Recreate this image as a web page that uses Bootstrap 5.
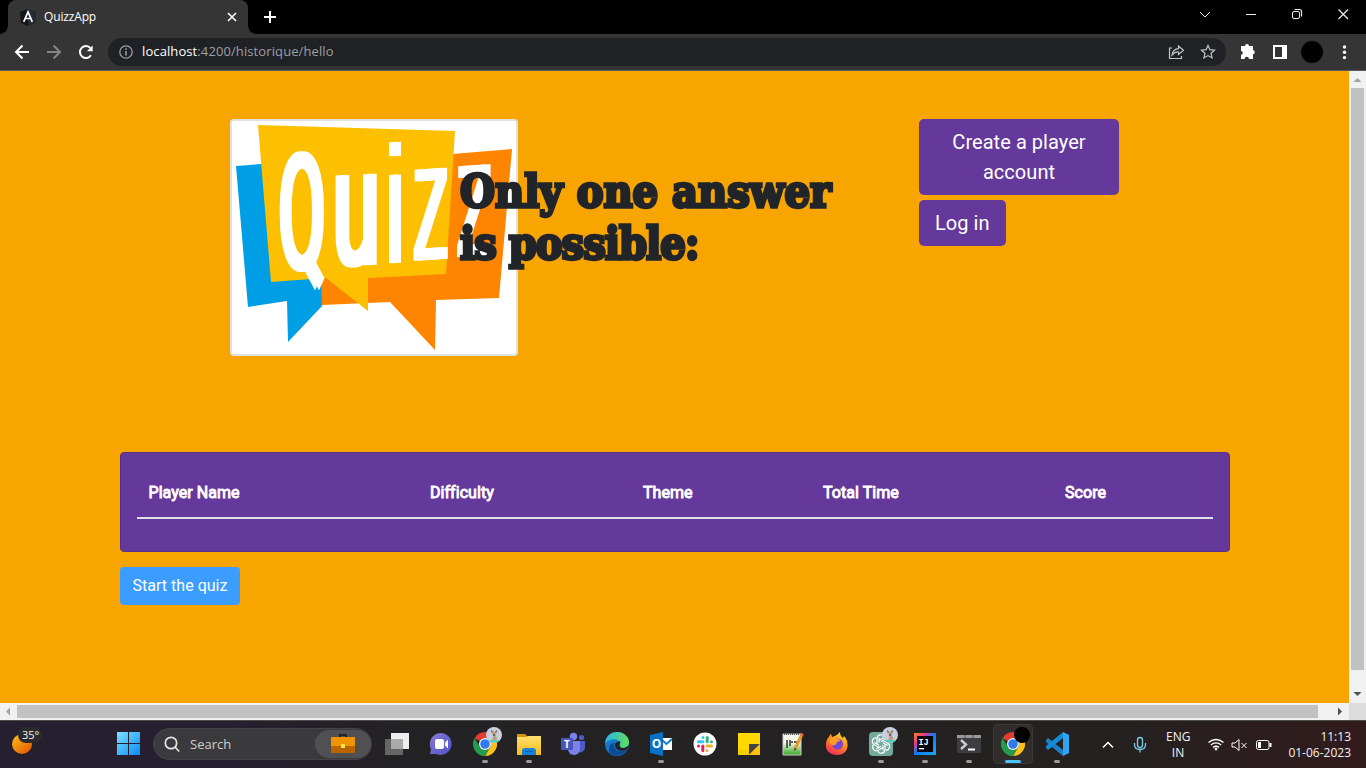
<!DOCTYPE html>
<html lang="en">
<head>
<meta charset="utf-8">
<title>QuizzApp</title>
<link href="https://cdn.jsdelivr.net/npm/bootstrap@5.3.0/dist/css/bootstrap.min.css" rel="stylesheet">
<script src="https://cdn.jsdelivr.net/npm/bootstrap@5.3.0/dist/js/bootstrap.bundle.min.js"></script>
<style>
body{width:1366px;height:768px;font-family:"Open Sans","Noto Sans",sans-serif;background:#000}
svg{display:block;flex:none}
.titlebar{height:34px;background:#000;color:#fff}
.window-controls{padding:0 16px 6px 0}
.tab{position:relative;width:240px;height:34px;margin-left:8px;background:#353535;border-radius:8px 8px 0 0;font-size:12px;letter-spacing:-.15px;padding:0 10px 0 12px}
.tab::before,.tab::after{content:"";position:absolute;bottom:0;width:8px;height:8px}
.tab::before{left:-8px;background:radial-gradient(circle at 0 0,#000 7.5px,#353535 8px)}
.tab::after{right:-8px;background:radial-gradient(circle at 100% 0,#000 7.5px,#353535 8px)}
.toolbar{height:37px;background:#353535;border-bottom:1px solid #5c5c5c}
.address{width:1118px;height:28px;border-radius:14px;background:#202124;font-size:13px;letter-spacing:.1px;color:#9aa0a6;padding:0 10px}
.page{width:1349px;height:632px;background:#f8a500;font-family:Roboto,sans-serif}
.hero{height:333px;padding:48px 0 0 230px}
.logo-frame{width:288px;height:237px;background:#fff;border:2px solid #dee2e6;border-radius:4px}
.logo-frame svg{overflow:visible}
.logo-word{fill:#fff;font-family:"Liberation Sans",sans-serif;filter:drop-shadow(4px 0 0 #fff)}
.logo-word .round{font-family:Roboto,sans-serif}
.logo-word .bold-stem{stroke:#fff;stroke-width:4px}
.headline{width:459px;margin-left:-58px;padding-top:47px;position:relative}
.headline h1{font-family:"DejaVu Serif",serif;font-weight:700;font-size:44px;line-height:52px;color:#212529;-webkit-text-stroke:3.4px #212529;white-space:nowrap;transform:scaleX(.912);transform-origin:0 0;margin:0}
.headline .tight{letter-spacing:-1.1px}
.btn-violet{background:#65389b!important;color:#fff!important;border-radius:5px;font-size:20px;line-height:30px;padding:8px 16px;border:0;letter-spacing:.05px}
.score-card{width:1110px;height:100px;margin:48px 0 0 120px;background:#65389b;border:1px solid #58318c;border-radius:4px;padding:16px}
.score-table{table-layout:fixed;color:#fff;margin:0}
.score-table th{font-weight:400;-webkit-text-stroke:.9px #fff;padding:12px;line-height:24px;border-bottom:2px solid #dee2e6;background:transparent;color:#fff;letter-spacing:.05px}
.score-table th:first-child{padding-left:11.500px}
.btn-start{margin:15px 0 0 120px;background:#3a9dff;color:#fff;width:120px;height:38px;border:0;border-radius:4px;padding:6px 12px;font-size:16px;letter-spacing:.02px;white-space:nowrap}
.vbar{width:17px;background:#f1f1f1}
.vthumb{width:13px;height:582px;background:#c1c1c1}
.hbar{height:17px;background:#f1f1f1}
.hthumb{width:1301px;height:13px;background:#c1c1c1}
.taskbar{height:48px;border-top:1px solid #4b4b49;padding-bottom:2px;background:linear-gradient(90deg,#261f2f 0,#261f2f 230px,#232224 390px,#242120 1120px,#321b1c 1366px);color:#f3f3f3;font-size:12px;line-height:16px}
.weather{position:relative;width:117px}
.temp{position:absolute;left:18px;top:7px;background:#2b2b2b;border-radius:8px;padding:0 3px 0 4px;font-size:11px;line-height:16px}
.search{width:219px;height:32px;border-radius:16px;background:#3a393b;border:1px solid #444346;font-size:13px;color:#cfcfcf;padding-left:10px;margin:1px 3px 0 13px}
.search-pill{width:56px;height:28px;border-radius:14px;background:#505052}
.app{position:relative;width:44px;height:47px}
.app>svg{width:24px;height:24px}
.run::after{content:"";position:absolute;left:19px;bottom:4px;width:6px;height:3px;border-radius:2px;background:#9b9b9b}
.live::before{content:"";position:absolute;left:2px;top:4px;width:40px;height:40px;border-radius:4px;background:#302d2c;border:1px solid #3b3836}
.live::after{left:14px;width:16px;background:#4cc2ff}
.live>svg{position:relative}
.app>svg.face{position:absolute;left:23px;top:7px;width:16px;height:16px}
.tray{padding:2px 15px 0 0}
</style>
</head>
<body class="m-0 overflow-hidden">
<svg class="position-absolute" width="0" height="0">
<defs>
<linearGradient id="gw" x2="1" y2="1"><stop stop-color="#7ce0ff"/><stop offset="1" stop-color="#0a8cf5"/></linearGradient>
<linearGradient id="sun" x2=".7" y2="1"><stop stop-color="#ffc414"/><stop offset="1" stop-color="#e85e05"/></linearGradient>
<linearGradient id="chat" x2="1" y2="1"><stop stop-color="#8a79d5"/><stop offset="1" stop-color="#4d52c5"/></linearGradient>
<linearGradient id="edge" x2="1" y2="0"><stop stop-color="#27b4ef"/><stop offset="1" stop-color="#63de59"/></linearGradient>
<linearGradient id="ij" x2="1" y2="1"><stop stop-color="#fc801d"/><stop offset=".28" stop-color="#e4398b"/><stop offset=".5" stop-color="#087cfa"/><stop offset="1" stop-color="#20a7ef"/></linearGradient>
<linearGradient id="ff" x1=".8" y1="0" x2=".3" y2="1"><stop stop-color="#ffe226"/><stop offset=".5" stop-color="#ff8518"/><stop offset="1" stop-color="#f52860"/></linearGradient>
<linearGradient id="np" x2="0" y2="1"><stop offset=".4" stop-color="#f4f8ec"/><stop offset="1" stop-color="#36a81d"/></linearGradient>
<linearGradient id="fold" x2="0" y2="1"><stop stop-color="#ffe06f"/><stop offset="1" stop-color="#fbb916"/></linearGradient>
<symbol id="chrome" viewBox="0 0 24 24"><path fill="#e33b2e" d="M12 0a12 12 0 0 1 10.4 6H12a6 6 0 0 0-5.3 3.2L1.600 6A12 12 0 0 1 12 0z"/><path fill="#fbc116" d="M22.400 6A12 12 0 0 1 12 24l5.200-9A6 6 0 0 0 12 6z"/><path fill="#229c4d" d="M1.600 6 6.800 15a6 6 0 0 0 10.400 0L12 24A12 12 0 0 1 1.600 6z"/><circle cx="12" cy="12" r="6" fill="#fff"/><circle cx="12" cy="12" r="4.800" fill="#2f7bed"/></symbol>
<symbol id="face" viewBox="0 0 16 16"><circle cx="8" cy="8" r="8" fill="#c7cfdf"/><path d="M2 13h12a8 8 0 0 1-12 0" fill="#50cbbd"/><path d="m5 3 2 1.500h2L11 3l-.6 3-1 2 1.600 2.500-.5 2.500h-4l1-5L5.600 6z" fill="#b9a07c"/><path d="m5 3 1.700 1.500-.9 1.300zM11 3 9.300 4.500l.9 1.300zM7.300 7h1.400v2H7.300z" fill="#4d423d"/></symbol>
</defs></svg>

<header class="titlebar d-flex align-items-center">
  <div class="tab d-flex align-items-center">
    <svg width="16" height="17" viewBox="0 0 16 17"><path fill="#12151c" d="M8 0 16 3l-1 11-7 3-7-3L0 3z"/><path fill="#242a36" d="M8 0 16 3l-1 11-7 3z"/><path d="m3.700 12.800 4.300-10 4.300 10M5.500 9.500h5" fill="none" stroke="#fff" stroke-width="1.700"/></svg>
    <span class="ms-2 flex-grow-1">QuizzApp</span>
    <svg width="12" height="12" viewBox="0 0 12 12"><path d="m2 2 8 8m0-8-8 8" stroke="#fff" stroke-width="1.600"/></svg>
  </div>
  <svg class="ms-3" width="12" height="12"><path d="M6 0v12M0 6h12" stroke="#fff" stroke-width="2"/></svg>
  <div class="window-controls d-flex align-items-center ms-auto">
    <svg width="166" height="14" viewBox="0 0 166 14" fill="none" stroke="#eee"><path d="m16 5 5 5 5-5M62 7.500h10"/><rect x="108.500" y="4.500" width="7" height="7" rx="1.500"/><path d="M110.500 2.500h5q2 0 2 2v5M154.500 2.500l9.500 9.500m0-9.500-9.500 9.500" stroke-width="1.200"/></svg>
  </div>
</header>

<nav class="toolbar d-flex align-items-center">
  <svg width="108" height="28" viewBox="0 0 108 28" fill="none" stroke="#fff" stroke-width="2"><path d="M29 14H16m6.500-6.500L16 14l6.500 6.500"/><path stroke="#858585" d="M47 14h13m-6.500-6.500L60 14l-6.500 6.500"/><path d="M91 17.300a6 6 0 1 1-.5-7.200"/><path d="M92.700 7.500v5.800h-5.800z" fill="#fff" stroke="none"/></svg>
  <div class="address d-flex align-items-center">
    <svg width="16" height="16" viewBox="0 0 16 16"><circle cx="8" cy="8" r="6.200" stroke="#9aa0a6" stroke-width="1.300" fill="none"/><path d="M8 7v4.500M8 4.300v1.600" stroke="#9aa0a6" stroke-width="1.500"/></svg>
    <span class="flex-grow-1 ms-2"><span class="text-white">localhost</span>:4200/historique/hello</span>
    <svg width="48" height="18" viewBox="0 0 48 18" fill="none" stroke="#c4c7c9" stroke-width="1.200"><path d="M4 5H1.500v10.500h12V13M4 12q1-6 6.500-6.400V3l5 4.200-5 4.200V9Q7 8.500 4 12z"/><path d="m40 2.500 1.900 4.200 4.600.5-3.400 3.100.9 4.600-4-2.300-4 2.300.9-4.600-3.400-3.100 4.600-.5z"/></svg>
  </div>
  <svg width="140" height="30" viewBox="0 0 140 30"><path fill="#fff" d="M16 9h3a2 2 0 0 1 4 0h4v4a2.200 2.200 0 0 1 0 4.300V22h-4a2.200 2.200 0 0 0-4.400 0H15v-4a2.200 2.200 0 0 0 0-4.300V9z"/><path fill="#fff" d="M47 8h14v14H47z"/><path fill="#353535" d="M49 10h7v10h-7z"/><circle cx="86" cy="15" r="11" fill="#000"/><g fill="#fff"><circle cx="118.500" cy="10" r="1.700"/><circle cx="118.500" cy="15.300" r="1.700"/><circle cx="118.500" cy="20.600" r="1.700"/></g></svg>
</nav>

<div class="d-flex">
<main class="page">
  <section class="hero d-flex align-items-start">
    <div class="logo-frame flex-shrink-0">
      <svg width="284" height="233" viewBox="232 121 284 233">
        <path fill="#009fe5" d="m236 166 26-2 60 120v22l-34 36-1-41-39 6z"/>
        <path fill="#ff8500" d="m320 250 132-96 60-5-13 149-63 2-1 50-45-48-68 3z"/>
        <path fill="#fcc000" d="m258 125 197 6-9 143-78 4v33l-42-33-55 4z"/>
        <g class="logo-word">
        <text class="round bold-stem" transform="translate(277 268) scale(.42 1)" font-size="160">Q</text>
        <text class="round bold-stem" transform="translate(331 265) skewY(-3) scale(.51 1)" font-size="165">u</text>
        <text transform="translate(383 263.500) skewY(-3) scale(.54 1)" font-size="167">i</text>
        <text transform="translate(410.500 261) skewY(-4) scale(.43 1)" font-size="172">z</text>
        <text transform="translate(454 257.500) skewY(-4) scale(.43 1)" font-size="172">z</text>
        </g>
      </svg>
    </div>
    <div class="headline flex-shrink-0"><h1>Only one answer<br><span class="tight">is possible:</span></h1></div>
    <div class="d-flex flex-column align-items-start" style="width:200px;gap:5px">
      <button class="btn btn-violet">Create a player account</button>
      <button class="btn btn-violet">Log in</button>
    </div>
  </section>
  <section class="score-card">
    <table class="table score-table">
      <colgroup><col style="width:281px"><col style="width:213px"><col style="width:180px"><col style="width:242px"><col></colgroup>
      <thead><tr><th>Player Name</th><th>Difficulty</th><th>Theme</th><th>Total Time</th><th>Score</th></tr></thead>
    </table>
  </section>
  <button class="btn btn-start">Start the quiz</button>
</main>
<aside class="vbar d-flex flex-column align-items-center">
  <svg width="17" height="17"><path d="M4.500 11h8l-4-4z" fill="#a3a3a3"/></svg>
  <div class="vthumb"></div>
  <svg class="mt-auto" width="17" height="17"><path d="M4.500 6h8l-4 4z" fill="#505050"/></svg>
</aside>
</div>
<div class="hbar d-flex align-items-center">
  <svg width="17" height="17"><path d="M10 4.500v8l-4-4z" fill="#a3a3a3"/></svg>
  <div class="hthumb"></div>
  <svg class="ms-auto" width="17" height="17"><path d="M6 4.500v8l4-4z" fill="#505050"/></svg>
  <svg width="17" height="17"><path d="M0 0h17v17H0z" fill="#dcdcdc"/></svg>
</div>

<footer class="taskbar d-flex align-items-center">
  <div class="weather"><svg width="40" height="47"><circle cx="22" cy="24" r="10" fill="url(#sun)"/></svg><span class="temp">35°</span></div>
  <svg width="23" height="23" viewBox="0 0 23 23"><path fill="url(#gw)" d="M0 0h11v11H0zM12 0h11v11H12zM0 12h11v11H0zM12 12h11v11H12z"/></svg>
  <div class="search d-flex align-items-center">
    <svg width="16" height="17" viewBox="0 0 16 17" fill="none" stroke="#e5e5e5" stroke-width="1.700"><circle cx="7" cy="7" r="5.700"/><path d="m11 11 4.200 4.500"/></svg>
    <span style="margin-left:10px" class="flex-grow-1">Search</span>
    <div class="search-pill d-flex justify-content-center align-items-center"><svg width="24" height="20" viewBox="0 0 24 20"><path d="M9 3V1h6v2" stroke="#222" stroke-width="2" fill="none"/><path fill="#f19404" d="M0 3h24v10H0z"/><path fill="#b96404" d="M0 12h24v7H0z"/><path fill="#ffe14a" d="M10 10h4v4h-4z"/></svg></div>
  </div>
  <div class="app d-flex justify-content-center align-items-center"><svg viewBox="0 0 24 24"><path d="M6 1h18v16H6z" fill="#eee"/><path d="M0 7h18v16H0z" fill="#666"/><path d="M6 7h12v10H6z" fill="#aaa"/></svg></div>
  <div class="app d-flex justify-content-center align-items-center"><svg viewBox="0 0 24 24"><path d="M12 1a11 11 0 1 1-5 21H1l1-5A11 11 0 0 1 12 1z" fill="url(#chat)"/><rect x="6" y="7" width="9" height="10" rx="2" fill="#fff"/><path fill="#fff" d="m16 10.500 3-3v9l-3-3z"/></svg></div>
  <div class="app run d-flex justify-content-center align-items-center"><svg><use href="#chrome"/></svg><svg class="face"><use href="#face"/></svg></div>
  <div class="app run d-flex justify-content-center align-items-center"><svg viewBox="0 0 24 24"><path d="M0 2h8l3 3h11v8H0z" fill="#d89506"/><path d="M0 5h9l2-1h13v19H0z" fill="url(#fold)"/><path d="M5 23v-4q0-3 3-3h8q3 0 3 3v4z" fill="#1683d8"/><path d="M8 19h8v1H8z" fill="#0b5fa8"/></svg></div>
  <div class="app d-flex justify-content-center align-items-center"><svg viewBox="0 0 24 24"><circle cx="12.500" cy="4.500" r="3.700" fill="#7b83eb"/><circle cx="20.500" cy="5.500" r="2.600" fill="#5059c9"/><path d="M16 9h8v7a5 5 0 0 1-7 4z" fill="#5059c9"/><path d="M7 9h12v8a6 6 0 0 1-12 0z" fill="#7b83eb"/><rect y="6" width="12" height="12" rx="1" fill="#4b53bc"/><text x="6" y="15.500" text-anchor="middle" font-size="10" font-weight="700" fill="#fff">T</text></svg></div>
  <div class="app d-flex justify-content-center align-items-center"><svg viewBox="0 0 24 24"><circle cx="12" cy="12" r="12" fill="#1379cb"/><path d="M0 11C1 3 7 0 12 0c7 0 12 5 12 10 0 4-3 6-6 6-4 0-4-2-3-3C16 8 9 4 0 11z" fill="url(#edge)"/><path d="M9 13c0 5 5 8 13 5-4 7-17 8-18 0-.5-4 2-7 6-7.500C9.300 11 9 12 9 13z" fill="#0c4b95"/><path d="M15.500 9.500c0 2-2 3-.5 5 2 2.500 6 2 8.500-1.500-.2 2-.7 3.500-1.500 5-6 2-12 0-12-5 0-3 4-4 5.500-3.500z" fill="#252225"/></svg></div>
  <div class="app run d-flex justify-content-center align-items-center"><svg viewBox="0 0 24 24"><path fill="#fff" d="M12 6h11v12H12z"/><path d="m12 7 5.500 5L23 7" stroke="#147bd0" stroke-width="2" fill="none"/><path fill="#0871c5" d="m1 3 13-3v24L1 21z"/><text x="7.500" y="16" text-anchor="middle" font-size="12" font-weight="700" fill="#fff">O</text></svg></div>
  <div class="app d-flex justify-content-center align-items-center"><svg viewBox="0 0 24 24"><circle cx="12" cy="12" r="11.500" fill="#fff"/><g stroke-width="3" stroke-linecap="round"><path stroke="#36c5f0" d="M10 5.500v.1M5.500 9.700H10"/><path stroke="#2eb67d" d="M14.200 5.500v4.200M18.500 9.700v.1"/><path stroke="#ecb22e" d="M14 14h4.500M14 18.500v.1"/><path stroke="#e01e5a" d="M5.500 14v.1M9.800 14v4.500"/></g></svg></div>
  <div class="app d-flex justify-content-center align-items-center"><svg viewBox="0 0 24 24"><path fill="#ffd900" d="M1 1h22v22H1z"/><path fill="#e6bd00" d="M1 18h11v5H1z" opacity=".4"/><path fill="#444" d="M12 12h11L12 23z"/><path fill="#ffc000" d="m23 12-11 11h11z"/></svg></div>
  <div class="app d-flex justify-content-center align-items-center"><svg viewBox="0 0 24 24"><path fill="url(#np)" stroke="#ccc" stroke-width="1" d="M2 2h18v21H2z"/><path d="M3 2h16" stroke="#555" stroke-width="2" stroke-dasharray="1 1"/><path d="M6 8v8M9 8v6m1-4h2m1 0h3" stroke="#333" stroke-width="1.500"/><path d="m14 17 7-15" stroke="#e99b28" stroke-width="3"/><path d="m20.400 3.500 1-2" stroke="#d9645b" stroke-width="3"/><path d="m13 19 .5-3 2.200 1z" fill="#333"/></svg></div>
  <div class="app d-flex justify-content-center align-items-center"><svg viewBox="0 0 24 24"><path fill="url(#ff)" d="M4 5q1-3 2-3l1 3q4-1 6-3l2-2q0 4 3 6l1-2c6 6 5 19-7 19C4 23 0 18 1 11Q2 6 4 5z"/><circle cx="12.500" cy="12" r="5.500" fill="#7645d8"/><path d="M5 7q4-3 7 0c2 0 4 1 3 2l-3 1q-1 4-5 3-4-2-2-6z" fill="#ff9c25"/></svg></div>
  <div class="app run d-flex justify-content-center align-items-center"><svg viewBox="0 0 24 24"><rect width="24" height="24" rx="4" fill="#74aa9c"/><g fill="none" stroke="#fff" stroke-width="1.200"><path id="pt" d="M8 12V6.500a3.700 3.700 0 0 1 7-1.700M12 9.700l4.700-2.700"/><use href="#pt" transform="rotate(60 12 12)"/><use href="#pt" transform="rotate(120 12 12)"/><use href="#pt" transform="rotate(180 12 12)"/><use href="#pt" transform="rotate(240 12 12)"/><use href="#pt" transform="rotate(300 12 12)"/></g></svg><svg class="face"><use href="#face"/></svg></div>
  <div class="app run d-flex justify-content-center align-items-center"><svg viewBox="0 0 24 24"><path fill="url(#ij)" d="M1 1h22v22H1z"/><path fill="#090612" d="M4 4h16v16H4z"/><text x="5.500" y="12.500" font-size="8.500" font-weight="700" fill="#fff" font-family="Liberation Mono,monospace">IJ</text><path fill="#fff" d="M6 16h5v1.300H6z"/></svg></div>
  <div class="app run d-flex justify-content-center align-items-center"><svg viewBox="0 0 24 24"><rect y="3" width="24" height="18" rx="1" fill="#3d3d3f"/><path fill="#999" d="M0 3h24v3H0z"/><path d="M8 3v3m8-3v3" stroke="#555"/><path d="m4 8 5 4.500L4 17" stroke="#ccc" stroke-width="2.400" fill="none"/><path d="M11 17.500h7" stroke="#fff" stroke-width="2"/></svg></div>
  <div class="app run live d-flex justify-content-center align-items-center"><svg><use href="#chrome"/></svg><svg class="face" viewBox="0 0 16 16"><circle cx="8" cy="8" r="8"/></svg></div>
  <div class="app run d-flex justify-content-center align-items-center"><svg viewBox="0 0 24 24"><path fill="#1b80c8" d="m1 8 2-2 15 12v6L1 10z"/><path fill="#148bd7" d="m1 16 2 2L18 6V0L1 14z"/><path fill="#30a6ef" d="m18 0 6 3v18l-6 3z"/></svg></div>
  <div class="tray d-flex align-items-center ms-auto">
    <svg width="60" height="24" viewBox="1096 732 60 24" style="margin-right:10px" fill="none"><path d="m1103 746.500 5-5 5 5" stroke="#fff" stroke-width="1.500"/><g stroke="#78cce6" stroke-width="1.300"><rect x="1137.500" y="736.500" width="5" height="10" rx="2.500"/><path d="M1134.500 742v1.500q0 5 5.500 5t5.500-5V742m-5.500 6.500v3"/></g></svg>
    <div class="text-center" style="width:24px">ENG<br>IN</div>
    <svg width="66" height="20" viewBox="1207 734 66 20" style="margin-left:17px" fill="none" stroke="#fff"><g stroke-width="1.400"><path d="M1208.500 741.500q7.500-6 15 0M1210.800 744q5.200-4.200 10.400 0M1213 746.500q3-2.500 6 0"/></g><circle cx="1216" cy="748" r="1" fill="#fff"/><path d="M1232 742h3l4-3.500v11l-4-3.500h-3zm9.500 0 5 5m0-5-5 5"/><rect x="1256.500" y="739.500" width="12.500" height="9" rx="2"/><path d="M1270.500 742v4" stroke-width="2"/><path fill="#fff" stroke="none" d="M1258 741h3v6h-3z"/></svg>
    <div class="text-end text-nowrap" style="width:78px">11:13<br>01-06-2023</div>
  </div>
</footer>
</body>
</html>
